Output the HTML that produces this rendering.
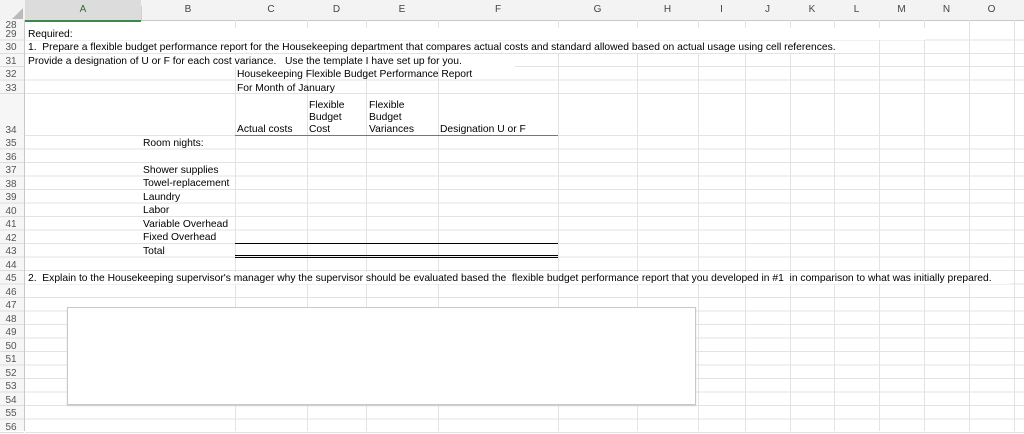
<!DOCTYPE html>
<html><head><meta charset="utf-8"><style>
body{margin:0;width:1024px;height:431px;overflow:hidden;background:#fff;font-family:"Liberation Sans",Arial,sans-serif;position:relative}
.a{position:absolute}
.t{position:absolute;font-size:10.3px;color:#000;white-space:nowrap;line-height:12px;margin-top:1px}
.rn{position:absolute;left:0;width:22px;text-align:center;font-size:10px;color:#555;line-height:12px;margin-top:1px}
.ch{position:absolute;top:4px;font-size:10px;color:#444;text-align:center}
.v{position:absolute;top:20px;width:1px;height:411px;background:#e3e3e3}
</style></head><body>
<div class="a" style="left:0;top:0;width:1024px;height:20px;background:#f3f3f3;border-bottom:1px solid #c8c8c8"></div>
<div class="a" style="left:25px;top:0;width:116px;height:20px;background:#dcdcdc;border-bottom:2px solid #3a8a4a"></div>
<div class="a" style="left:0;top:0;width:24px;height:20px;background:#f3f3f3"></div>
<svg class="a" style="left:12px;top:8px" width="11" height="11"><polygon points="11,0 11,11 0,11" fill="#bbb"/></svg>
<div class="a" style="left:0;top:20px;width:24px;height:411px;background:#f6f6f6;border-right:1px solid #c8c8c8"></div>
<div class="a" style="left:25px;top:27px;width:1000px;height:67px;background:repeating-linear-gradient(to bottom,transparent 0,transparent 12.4px,#e3e3e3 12.4px,#e3e3e3 13.4px)"></div>
<div class="a" style="left:25px;top:135px;width:1000px;height:1px;background:#e3e3e3"></div>
<div class="a" style="left:25px;top:136px;width:1000px;height:297px;background:repeating-linear-gradient(to bottom,transparent 0,transparent 12.5px,#e3e3e3 12.5px,#e3e3e3 13.5px)"></div>
<div class="a" style="left:0;top:27px;width:24px;height:67px;background:repeating-linear-gradient(to bottom,transparent 0,transparent 12.4px,#ddd 12.4px,#ddd 13.4px)"></div>
<div class="a" style="left:0;top:136px;width:24px;height:297px;background:repeating-linear-gradient(to bottom,transparent 0,transparent 12.5px,#ddd 12.5px,#ddd 13.5px)"></div>
<div class="v" style="left:235px"></div><div class="v" style="left:307px"></div><div class="v" style="left:366px"></div>
<div class="v" style="left:438px"></div><div class="v" style="left:558px"></div><div class="v" style="left:637px"></div>
<div class="v" style="left:698px"></div><div class="v" style="left:745px"></div><div class="v" style="left:790px"></div>
<div class="v" style="left:834px"></div><div class="v" style="left:879px"></div><div class="v" style="left:924px"></div>
<div class="v" style="left:969px"></div><div class="v" style="left:1014px"></div>
<div class="a" style="left:141px;top:6px;width:1px;height:14px;background:#d0d0d0"></div>
<div class="a" style="left:25px;top:28px;width:900px;height:12px;background:#fff"></div>
<div class="a" style="left:25px;top:41px;width:830px;height:12px;background:#fff"></div>
<div class="a" style="left:25px;top:55px;width:490px;height:12px;background:#fff"></div>
<div class="a" style="left:25px;top:272px;width:985px;height:12px;background:#fff"></div>
<div class="ch" style="left:25px;width:116px;color:#2c6e3a">A</div>
<div class="ch" style="left:141px;width:94px">B</div>
<div class="ch" style="left:235px;width:72px">C</div>
<div class="ch" style="left:307px;width:59px">D</div>
<div class="ch" style="left:366px;width:72px">E</div>
<div class="ch" style="left:438px;width:120px">F</div>
<div class="ch" style="left:558px;width:79px">G</div>
<div class="ch" style="left:637px;width:61px">H</div>
<div class="ch" style="left:698px;width:47px">I</div>
<div class="ch" style="left:745px;width:45px">J</div>
<div class="ch" style="left:790px;width:44px">K</div>
<div class="ch" style="left:834px;width:45px">L</div>
<div class="ch" style="left:879px;width:45px">M</div>
<div class="ch" style="left:924px;width:45px">N</div>
<div class="ch" style="left:969px;width:45px">O</div>
<div class="rn" style="top:19px">28</div>
<div class="rn" style="top:28px">29</div><div class="rn" style="top:41px">30</div><div class="rn" style="top:55px">31</div>
<div class="rn" style="top:68px">32</div><div class="rn" style="top:82px">33</div><div class="rn" style="top:124px">34</div>
<div class="rn" style="top:137px">35</div><div class="rn" style="top:151px">36</div><div class="rn" style="top:164px">37</div>
<div class="rn" style="top:178px">38</div><div class="rn" style="top:191px">39</div><div class="rn" style="top:205px">40</div>
<div class="rn" style="top:218px">41</div><div class="rn" style="top:232px">42</div><div class="rn" style="top:245px">43</div>
<div class="rn" style="top:259px">44</div><div class="rn" style="top:272px">45</div><div class="rn" style="top:286px">46</div>
<div class="rn" style="top:299px">47</div><div class="rn" style="top:313px">48</div><div class="rn" style="top:326px">49</div>
<div class="rn" style="top:340px">50</div><div class="rn" style="top:353px">51</div><div class="rn" style="top:367px">52</div>
<div class="rn" style="top:380px">53</div><div class="rn" style="top:394px">54</div><div class="rn" style="top:407px">55</div>
<div class="rn" style="top:421px">56</div>
<div class="t" style="left:28px;top:28px">Required:</div>
<div class="t" style="left:28px;top:41px">1.&nbsp; Prepare a flexible budget performance report for the Housekeeping department that compares actual costs and standard allowed based on actual usage using cell references.</div>
<div class="t" style="left:28px;top:55px">Provide a designation of U or F for each cost variance.&nbsp;&nbsp; Use the template I have set up for you.</div>
<div class="t" style="left:237px;top:68px">Housekeeping Flexible Budget Performance Report</div>
<div class="t" style="left:237px;top:82px">For Month of January</div>
<div class="t" style="left:309px;top:99px;line-height:12px">Flexible<br>Budget<br>Cost</div>
<div class="t" style="left:369px;top:99px;line-height:12px">Flexible<br>Budget<br>Variances</div>
<div class="t" style="left:237px;top:123px">Actual costs</div>
<div class="t" style="left:440px;top:123px">Designation U or F</div>
<div class="t" style="left:143px;top:137px">Room nights:</div>
<div class="t" style="left:143px;top:164px">Shower supplies</div>
<div class="t" style="left:143px;top:177px">Towel-replacement</div>
<div class="t" style="left:143px;top:191px">Laundry</div>
<div class="t" style="left:143px;top:204px">Labor</div>
<div class="t" style="left:143px;top:218px">Variable Overhead</div>
<div class="t" style="left:143px;top:231px">Fixed Overhead</div>
<div class="t" style="left:143px;top:245px">Total</div>
<div class="t" style="left:28px;top:272px">2.&nbsp; Explain to the Housekeeping supervisor's manager why the supervisor should be evaluated based the&nbsp; flexible budget performance report that you developed in #1&nbsp; in comparison to what was initially prepared.</div>
<div class="a" style="left:235px;top:135px;width:323px;height:1px;background:#777"></div>
<div class="a" style="left:235px;top:243px;width:323px;height:1px;background:#000"></div>
<div class="a" style="left:235px;top:255px;width:323px;height:1px;background:#000"></div>
<div class="a" style="left:235px;top:257px;width:323px;height:1px;background:#000"></div>
<div class="a" style="left:67px;top:307px;width:627px;height:96px;background:#fff;border:1px solid #c8c8c8;box-shadow:0 1px 1px #ccc"></div>
</body></html>
